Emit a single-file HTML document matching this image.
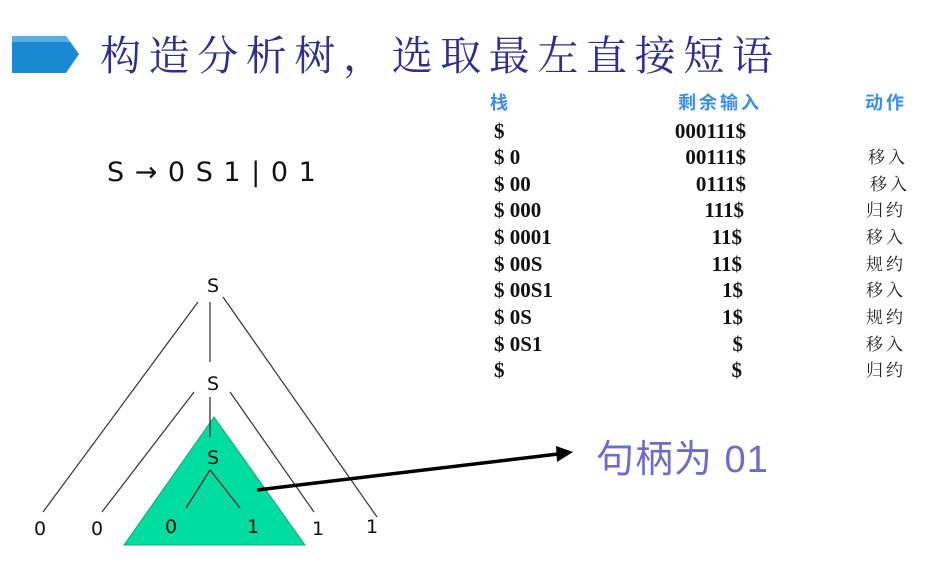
<!DOCTYPE html>
<html><head><meta charset="utf-8"><style>
html,body{margin:0;padding:0;background:#fff;width:950px;height:588px;overflow:hidden}
svg{display:block}
.t{font-family:"Liberation Serif","Noto Serif CJK SC",serif;font-weight:bold;font-size:21px;fill:#111}
.a{font-family:"Liberation Serif","Noto Serif CJK SC",serif;font-size:17px;fill:#222}
.h{font-family:"Liberation Sans","Noto Sans CJK SC",sans-serif;font-weight:bold;font-size:18px;fill:#3a8ee6}
.s{font-family:"DejaVu Sans","Liberation Sans",sans-serif;font-size:19px;fill:#111}
</style></head><body>
<svg width="950" height="588" viewBox="0 0 950 588">
<polygon points="12,36 66,36 79,54 66,73 12,73" fill="#1b88d4"/>
<polygon points="12,36 66,36 70,42 12,42" fill="#5aaee6"/>
<text x="100" y="70" font-family="Noto Serif CJK SC,serif" font-size="41" fill="#2e2e8c" letter-spacing="7.6">构造分析树，选取最左直接短语</text>
<text x="107" y="181" font-family="DejaVu Sans,Liberation Sans,sans-serif" font-size="27" fill="#111" letter-spacing="1">S → 0 S 1 | 0 1</text>

<text class="h" x="490" y="109">栈</text>
<text class="h" x="678" y="109" letter-spacing="3">剩余输入</text>
<text class="h" x="865" y="109" letter-spacing="3">动作</text>
<g class="t">
<text x="494" y="138">$</text><text x="494" y="164">$ 0</text><text x="494" y="191">$ 00</text><text x="494" y="217">$ 000</text><text x="494" y="244">$ 0001</text><text x="494" y="271">$ 00S</text><text x="494" y="297">$ 00S1</text><text x="494" y="324">$ 0S</text><text x="494" y="351">$ 0S1</text><text x="494" y="377">$</text>
</g>
<g class="t" text-anchor="end">
<text x="746" y="138">000111$</text><text x="746" y="164">00111$</text><text x="746" y="191">0111$</text><text x="744" y="217">111$</text><text x="742" y="244">11$</text><text x="742" y="271">11$</text><text x="743" y="297">1$</text><text x="743" y="324">1$</text><text x="743" y="351">$</text><text x="742" y="377">$</text>
</g>
<g class="a" letter-spacing="3">
<text x="868" y="163">移入</text><text x="870" y="190">移入</text><text x="866" y="216">归约</text><text x="866" y="243">移入</text><text x="866" y="270">规约</text><text x="866" y="296">移入</text><text x="866" y="323">规约</text><text x="866" y="350">移入</text><text x="866" y="376">归约</text>
</g>

<g stroke="#333" stroke-width="1.2" fill="none">
<line x1="198" y1="302" x2="43" y2="512"/>
<line x1="210" y1="302" x2="210" y2="362"/>
<line x1="223" y1="297" x2="377" y2="517"/>
<line x1="194" y1="392" x2="102" y2="512"/>
<line x1="230" y1="392" x2="314" y2="512"/>
</g>
<polygon points="214,417 124,545 305,545" fill="#00dba0" stroke="#20a080" stroke-width="1"/>
<g stroke="#222" stroke-width="1.2">
<line x1="210" y1="397" x2="210" y2="437"/>
<line x1="210" y1="470" x2="186" y2="508"/>
<line x1="210" y1="470" x2="240" y2="508"/>
</g>
<g class="s" text-anchor="middle">
<text x="213" y="292">S</text><text x="213" y="390">S</text><text x="213" y="464">S</text>
<text x="40" y="535">0</text><text x="97" y="535">0</text><text x="171" y="533">0</text><text x="253" y="533">1</text><text x="318" y="535">1</text><text x="372" y="533">1</text>
</g>
<line x1="257" y1="490" x2="558" y2="454" stroke="#000" stroke-width="3.5"/>
<polygon points="573,452 556,446 557,462" fill="#000"/>
<text x="596" y="472" font-family="Liberation Sans,Noto Sans CJK SC,sans-serif" font-size="38" fill="#6f6cc8" letter-spacing="1">句柄为 01</text>
</svg>
</body></html>
